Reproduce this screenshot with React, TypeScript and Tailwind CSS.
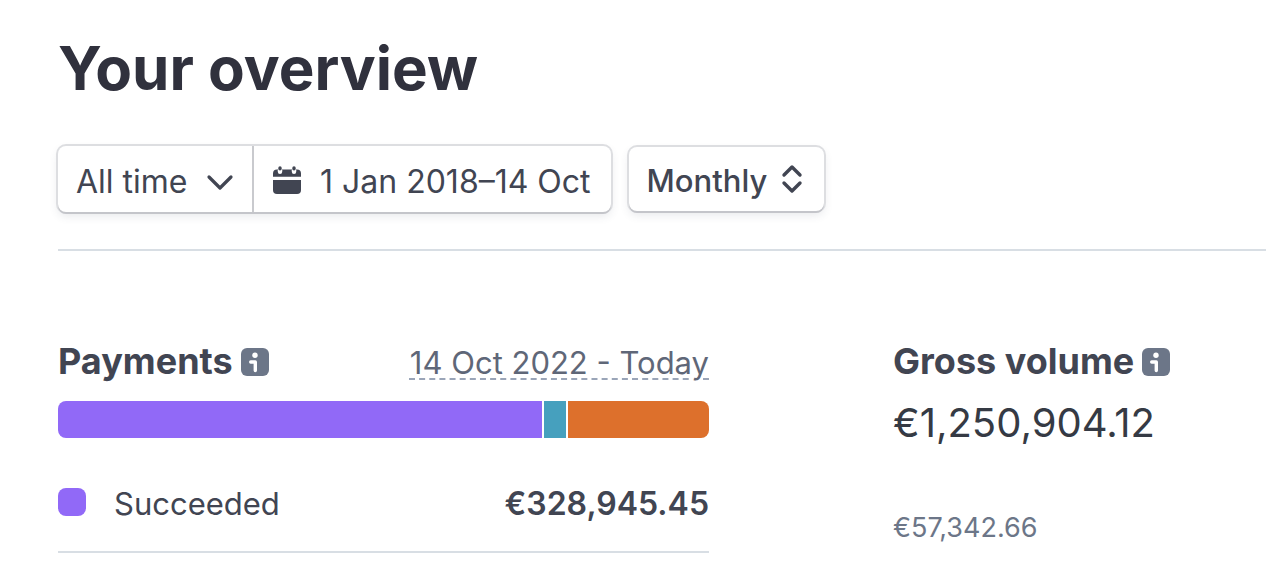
import { useState } from 'react'

const segments = [
  { name: 'Succeeded', share: 484, color: 'bg-[#9169f7]' },
  { name: 'Uncaptured', share: 22, color: 'bg-[#46a0be]' },
  { name: 'Refunded', share: 141, color: 'bg-[#dd702c]' },
]

const controlShadow =
  'bg-white shadow-[0_2px_0_0_#c4c5ca,0_0_0_2px_#dddee1,0_4px_10px_rgba(60,66,87,0.12)]'

function InfoButton({ label }: { label: string }) {
  return (
    <button type="button" aria-label={label} className="shrink-0 pt-0.5">
      <svg width="28" height="28" viewBox="0 0 28 28" fill="none">
        <rect width="28" height="28" rx="6" fill="#6c7688" />
        <circle cx="14" cy="7.2" r="2.7" fill="#fff" />
        <path d="M9.7 14h4.6v8.6" stroke="#fff" strokeWidth="3.4" strokeLinecap="round" strokeLinejoin="round" />
      </svg>
    </button>
  )
}

export default function OverviewPage() {
  const [range, setRange] = useState('All time')
  const [interval, setInterval] = useState('Monthly')

  return (
    <main className="overflow-hidden bg-white pl-[58px] pt-7 font-['Inter',sans-serif] text-[#414552]">
      <h1 className="text-[60px] leading-[80px] font-bold text-[#30313d]">Your overview</h1>

      {/* FILTERS */}
      <div className="mt-[38px] flex items-center gap-[18px] text-[32px] leading-10">
        <div className={`flex h-[66px] rounded-lg ${controlShadow}`}>
          <div className="relative flex border-r-2 border-[#c9cace]">
            <select
              aria-label="Date range"
              className="appearance-none bg-transparent pl-[18px] pr-16 pt-1.5 outline-none"
              value={range}
              onChange={e => setRange(e.target.value)}
            >
              <option>All time</option>
              <option>Today</option>
            </select>
            <svg className="pointer-events-none absolute right-[18px] top-7" width="28" height="18" viewBox="0 0 28 18" fill="none">
              <path d="M3 3l11 11L25 3" stroke="#414552" strokeWidth="3.2" strokeLinecap="round" strokeLinejoin="round" />
            </svg>
          </div>
          <button type="button" className="flex items-center gap-[18px] pl-[18px] pr-5 pt-1.5">
            <svg className="mb-1" width="30" height="28" viewBox="0 0 30 28" fill="#414552">
              <path d="M5 3.5h20a4 4 0 0 1 4 4v3.3H1V7.500a4 4 0 0 1 4-4z" />
              <path d="M1 14h28v10a4 4 0 0 1-4 4H5a4 4 0 0 1-4-4z" />
              {/* binding rings */}
              <rect x="5.8" y="2" width="4.400" height="6" rx="2.2" fill="#fff" />
              <rect x="19.8" y="2" width="4.400" height="6" rx="2.2" fill="#fff" />
              <rect x="6.3" y="0.200" width="3.400" height="4.200" rx="1.700" />
              <rect x="20.3" y="0.200" width="3.400" height="4.200" rx="1.700" />
            </svg>
            <span>1 Jan 2018–14 Oct</span>
          </button>
        </div>

        <div className={`relative flex h-16 rounded-lg text-[31px] font-medium ${controlShadow}`}>
          <select
            aria-label="Interval"
            className="appearance-none bg-transparent pl-[18px] pr-14 pt-1 outline-none"
            value={interval}
            onChange={e => setInterval(e.target.value)}
          >
            <option>Monthly</option>
            <option>Daily</option>
          </select>
          <svg className="pointer-events-none absolute right-5 top-[17px]" width="24" height="30" viewBox="0 0 24 30" fill="none">
            <path d="M4 11l8-8 8 8M4 19l8 8 8-8" stroke="#414552" strokeWidth="3.4" strokeLinecap="round" strokeLinejoin="round" />
          </svg>
        </div>
      </div>

      <div className="mt-[37px] grid grid-cols-[651fr_373fr] gap-x-[184px] border-t-2 border-[#d8dee4] pt-[88px]">
        {/* PAYMENTS */}
        <section>
          <div className="flex items-center justify-between">
            <div className="flex items-center gap-2">
              <h2 className="text-4xl leading-[44px] font-bold">Payments</h2>
              <InfoButton label="About payments" />
            </div>
            <button
              type="button"
              className="pt-1 text-[31px] leading-10 text-[#5f6778] underline decoration-[#9aa5b8] decoration-dashed decoration-2 underline-offset-4"
            >
              14 Oct 2022 - Today
            </button>
          </div>

          <div className="mt-[18px] flex h-[37px] gap-0.5 overflow-hidden rounded-lg">
            {segments.map(s => (
              <div key={s.name} className={s.color} style={{ flex: `${s.share} 1 0` }} />
            ))}
          </div>

          <div className="mt-[46px] flex items-center border-b-2 border-[#d8dee4] pb-[27px] leading-10">
            <span className="mr-7 mb-1 size-7 rounded-lg bg-[#9169f7]" />
            <span className="text-[31px]">Succeeded</span>
            <span className="ml-auto text-[32px] font-semibold">€328,945.45</span>
          </div>
        </section>

        {/* GROSS VOLUME */}
        <section>
          <div className="flex items-center gap-2">
            <h2 className="text-4xl leading-[44px] font-bold whitespace-nowrap">Gross volume</h2>
            <InfoButton label="About gross volume" />
          </div>
          <p className="mt-4 text-[40px] leading-[48px] text-[#353a44]">€1,250,904.12</p>
          <p className="mt-16 text-[27px] leading-[34px] text-[#6c7688]">€57,342.66</p>
        </section>
      </div>
    </main>
  )
}
